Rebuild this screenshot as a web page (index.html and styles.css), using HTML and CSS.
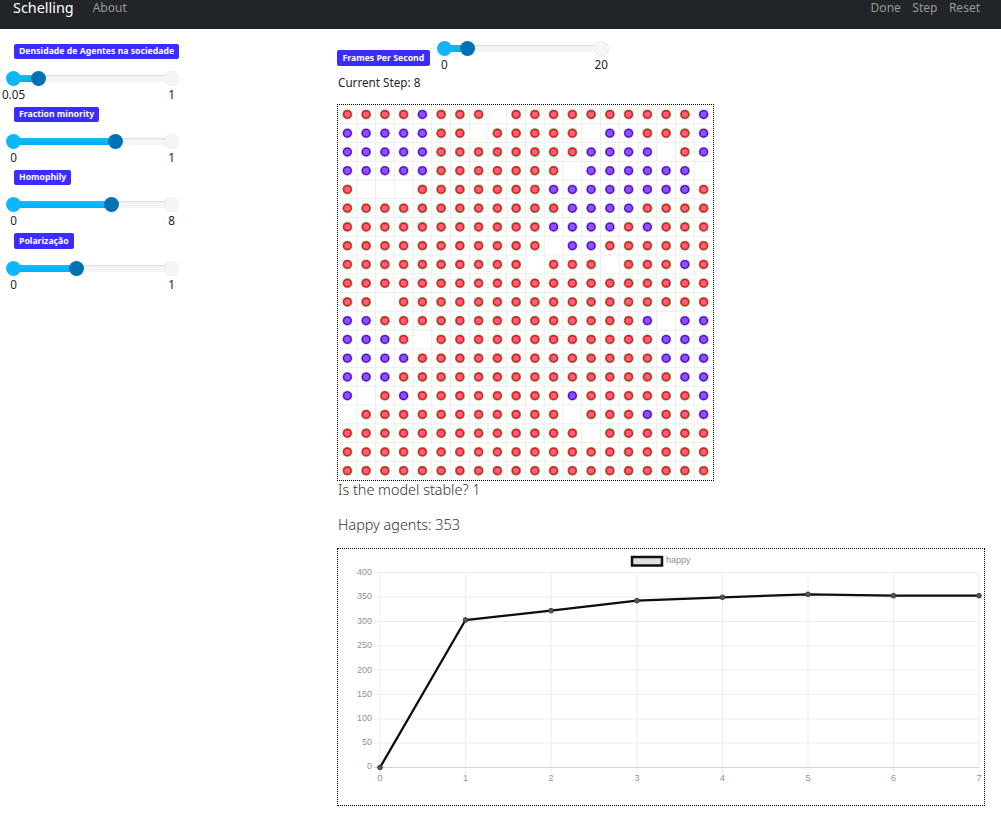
FILE: index.html
```html
<!DOCTYPE html>
<html lang="en">
<head>
    <meta charset="UTF-8">
    <title>Schelling</title>
    <link rel="stylesheet" href="styles.css">
</head>
<body>
    <nav class="navbar">
        <a class="brand" href="#">Schelling</a>
        <a class="nav-link about" href="#">About</a>
        <div class="nav-right">
            <a class="nav-link" href="#">Done</a>
            <a class="nav-link" href="#">Step</a>
            <a class="nav-link" href="#">Reset</a>
        </div>
    </nav>

    <div class="page">
        <div class="sidebar">
            <div class="param">
                <span class="badge">Densidade de Agentes na sociedade</span>
                <div class="slider">
                    <div class="track"><div class="fill" style="width: 15.8%"></div></div>
                    <span class="knob knob-min"></span>
                    <span class="knob knob-max"></span>
                    <span class="knob knob-value" style="left: 15.8%"></span>
                </div>
                <div class="range"><span>0.05</span><span>1</span></div>
            </div>
            <div class="param">
                <span class="badge">Fraction minority</span>
                <div class="slider">
                    <div class="track"><div class="fill" style="width: 64.6%"></div></div>
                    <span class="knob knob-min"></span>
                    <span class="knob knob-max"></span>
                    <span class="knob knob-value" style="left: 64.6%"></span>
                </div>
                <div class="range"><span>0</span><span>1</span></div>
            </div>
            <div class="param">
                <span class="badge">Homophily</span>
                <div class="slider">
                    <div class="track"><div class="fill" style="width: 62.2%"></div></div>
                    <span class="knob knob-min"></span>
                    <span class="knob knob-max"></span>
                    <span class="knob knob-value" style="left: 62.2%"></span>
                </div>
                <div class="range"><span>0</span><span>8</span></div>
            </div>
            <div class="param">
                <span class="badge">Polarização</span>
                <div class="slider">
                    <div class="track"><div class="fill" style="width: 40%"></div></div>
                    <span class="knob knob-min"></span>
                    <span class="knob knob-max"></span>
                    <span class="knob knob-value" style="left: 40%"></span>
                </div>
                <div class="range"><span>0</span><span>1</span></div>
            </div>
        </div>

        <div class="main">
            <div class="fps">
                <span class="badge">Frames Per Second</span>
                <div class="fps-control">
                    <div class="slider">
                        <div class="track"><div class="fill" style="width: 15%"></div></div>
                        <span class="knob knob-min"></span>
                        <span class="knob knob-max"></span>
                        <span class="knob knob-value" style="left: 15%"></span>
                    </div>
                    <div class="range"><span>0</span><span>20</span></div>
                </div>
            </div>
            <p class="step">Current Step: 8</p>
            <div class="grid-box">
                <canvas id="grid" width="375" height="375"></canvas>
            </div>
            <p class="stat">Is the model stable? 1</p>
            <p class="stat">Happy agents: 353</p>
            <div class="chart-box">
                <svg class="chart" width="646" height="256" viewBox="0 0 646 256">
                    <rect class="legend-box" x="294" y="8" width="30" height="8.5"/>
                    <text class="legend-text" x="328" y="14">happy</text>

                    <g class="gridlines">
                        <line x1="36" y1="23.5" x2="641" y2="23.5"/>
                        <line x1="36" y1="48" x2="641" y2="48"/>
                        <line x1="36" y1="72.5" x2="641" y2="72.5"/>
                        <line x1="36" y1="97" x2="641" y2="97"/>
                        <line x1="36" y1="121" x2="641" y2="121"/>
                        <line x1="36" y1="145.5" x2="641" y2="145.5"/>
                        <line x1="36" y1="170" x2="641" y2="170"/>
                        <line x1="36" y1="194" x2="641" y2="194"/>
                        <line x1="42" y1="23" x2="42" y2="224"/>
                        <line x1="127.5" y1="23" x2="127.5" y2="224"/>
                        <line x1="213" y1="23" x2="213" y2="224"/>
                        <line x1="299" y1="23" x2="299" y2="224"/>
                        <line x1="384.5" y1="23" x2="384.5" y2="224"/>
                        <line x1="470" y1="23" x2="470" y2="224"/>
                        <line x1="555.5" y1="23" x2="555.5" y2="224"/>
                        <line x1="641" y1="23" x2="641" y2="224"/>
                    </g>
                    <line class="axis" x1="36" y1="218.5" x2="641" y2="218.5"/>

                    <g class="y-labels">
                        <text x="34" y="26">400</text>
                        <text x="34" y="50">350</text>
                        <text x="34" y="75">300</text>
                        <text x="34" y="99">250</text>
                        <text x="34" y="124">200</text>
                        <text x="34" y="148">150</text>
                        <text x="34" y="172">100</text>
                        <text x="34" y="196">50</text>
                        <text x="34" y="220">0</text>
                    </g>
                    <g class="x-labels">
                        <text x="42" y="232">0</text>
                        <text x="127.5" y="232">1</text>
                        <text x="213" y="232">2</text>
                        <text x="299" y="232">3</text>
                        <text x="384.5" y="232">4</text>
                        <text x="470" y="232">5</text>
                        <text x="555.5" y="232">6</text>
                        <text x="641" y="232">7</text>
                    </g>

                    <polyline class="series" points="42,218.5 127.5,71 213,61.7 299,51.7 384.5,48.3 470,45.3 555.5,46.7 641,46.7"/>
                    <g class="points">
                        <circle cx="42" cy="218.5" r="2.4"/>
                        <circle cx="127.5" cy="71" r="2.4"/>
                        <circle cx="213" cy="61.7" r="2.4"/>
                        <circle cx="299" cy="51.7" r="2.4"/>
                        <circle cx="384.5" cy="48.3" r="2.4"/>
                        <circle cx="470" cy="45.3" r="2.4"/>
                        <circle cx="555.5" cy="46.7" r="2.4"/>
                        <circle cx="641" cy="46.7" r="2.4"/>
                    </g>
                </svg>
            </div>
        </div>
    </div>

    <script src="grid.js"></script>
</body>
</html>
```

FILE: styles.css
```css
body {
    margin: 0;
    font-family: "Noto Sans", sans-serif;
    font-size: 11.7px;
    color: #212529;
    background: #fff;
}
a {
    text-decoration: none;
}

.navbar {
    display: flex;
    align-items: flex-start;
    height: 29px;
    padding: 0 21px 0 13px;
    background: #212529;
}
.brand {
    font-size: 14.4px;
    line-height: 16px;
    color: #fff;
}
.nav-link {
    font-size: 12px;
    line-height: 15px;
    color: #999;
}
.about {
    margin-left: 19px;
}
.nav-right {
    display: flex;
    gap: 11.5px;
    margin-left: auto;
}

.page {
    display: flex;
    align-items: flex-start;
}
.sidebar {
    width: 173px;
    padding: 15px 0 0 6px;
    margin-right: 158px;
}
.param {
    height: 63px;
}
.badge {
    display: block;
    width: fit-content;
    padding: 0 5px;
    font-size: 8.7px;
    font-weight: 700;
    line-height: 15px;
    white-space: nowrap;
    color: #fff;
    background: #3b2dff;
    border-radius: 2px;
}
.param .badge {
    margin-left: 8px;
}
.param:last-child .badge {
    line-height: 16px;
}

.slider {
    position: relative;
    height: 15px;
    margin: 0 7.5px;
}
.param .slider {
    margin-top: 12px;
}
.track {
    position: absolute;
    top: 4px;
    left: 0;
    right: 0;
    height: 7px;
    background: #f5f5f5;
    box-shadow: inset 0 1px 1px rgba(0,0,0,0.1);
}
.fill {
    height: 100%;
    background: linear-gradient(#19baf5, #00b0ff);
}
.knob {
    position: absolute;
    top: 0;
    width: 15px;
    height: 15px;
    margin-left: -7.5px;
    border-radius: 50%;
}
.knob-min {
    left: 0;
    background: #0fb6fb;
}
.knob-max {
    left: 100%;
    background: #f5f5f5;
    box-shadow: inset 0 0 1px rgba(0,0,0,0.15);
}
.knob-value {
    background: #0071b4;
}
.range {
    display: flex;
    justify-content: space-between;
    line-height: 16px;
}
.range span {
    display: flex;
    justify-content: center;
    width: 15px;
    white-space: nowrap;
}

.main {
    width: 648px;
}
.fps {
    display: flex;
    align-items: flex-start;
    height: 45px;
}
.fps .badge {
    flex: none;
    margin-top: 21px;
    margin-right: 7px;
    padding: 0 5.5px;
    line-height: 16px;
}
.fps-control {
    width: 172px;
    padding-top: 12px;
}
.step {
    margin: 0 0 0 1px;
    line-height: 17px;
}
.grid-box {
    width: 375px;
    height: 375px;
    margin-top: 13px;
    border: 1px dotted #000;
}
#grid {
    display: block;
}
.stat {
    margin: 0 0 17px 1px;
    font-size: 14.4px;
    font-weight: 300;
    line-height: 18px;
    color: #333;
}
.stat + .stat {
    margin-bottom: 14px;
}
.chart-box {
    width: 646px;
    height: 256px;
    border: 1px dotted #000;
}
.chart {
    display: block;
}
.chart text {
    font-family: "Liberation Sans", sans-serif;
    font-size: 9px;
    fill: #919191;
}
.legend-box {
    fill: #e0e0e0;
    stroke: #111;
    stroke-width: 2.5;
}
.gridlines line {
    stroke: #ececec;
    stroke-width: 1;
}
.axis {
    stroke: #d4d4d4;
    stroke-width: 1;
}
.y-labels text {
    text-anchor: end;
}
.x-labels text {
    text-anchor: middle;
}
.series {
    fill: none;
    stroke: #0d0d0d;
    stroke-width: 2.3;
}
.points circle {
    fill: #555;
    stroke: #333;
    stroke-width: 0.8;
}
```

FILE: grid.js
```js
// r = red agent, p = purple agent, . = empty cell
const rows = [
    "rrrrprrr.rrrrrrrrrrp",
    "ppppprr.rrrrr.pprrrp",
    "ppppprrrrrrrrpppp.rp",
    "ppppprrrrrrr.pppppp.",
    "r...rrrrrrrppppppppr",
    "rrrrrrrrrrrrpppprrrr",
    "rrrrrrrrrrrpppprprrr",
    "rrrrrrrrrrr.pprrrrrr",
    "rrrrrrrrrr.rrr.rrrpr",
    "rrrrrrrrrrrrrrrrrrrr",
    "rr.rrrrrrrrrrrrrrrrr",
    "pprrrrrrrrrrrrrrp.pp",
    "pppr.rrrrrrrrrrrrppp",
    "pppprrrrrrrrrrrrrppp",
    "ppprrrrrrrrrrrrrrrpp",
    "p.rprrrrrrrrprrrrrrp",
    ".rrrrrrrrrrr.rrrprrp",
    "rrrrrrrrrrrrr.rrrrrr",
    "rrrrrrrrrrrrrrrrrrrr",
    "rrrrrrrrrrrrrrrrrrrr"
];

const ctx = document.getElementById("grid").getContext("2d");
const cell = 375 / 20;

ctx.strokeStyle = "#eee";
ctx.lineWidth = 1;
for (let i = 1; i < 20; i++) {
    ctx.beginPath();
    ctx.moveTo(i * cell, 0);
    ctx.lineTo(i * cell, 375);
    ctx.moveTo(0, i * cell);
    ctx.lineTo(375, i * cell);
    ctx.stroke();
}

function dot(x, y, r, color) {
    ctx.beginPath();
    ctx.arc(x, y, r, 0, Math.PI * 2);
    ctx.fillStyle = color;
    ctx.fill();
}

rows.forEach((row, j) => {
    [...row].forEach((kind, i) => {
        const x = (i + 0.5) * cell;
        const y = (j + 0.5) * cell;
        if (kind === "r") {
            dot(x, y, 5, "#4be03a");
            dot(x, y, 4.4, "#fa0a30");
            dot(x, y, 3, "#ff6080");
        } else if (kind === "p") {
            dot(x, y, 5, "#b9a0f5");
            dot(x, y, 4.5, "#4a0fc8");
            dot(x, y, 3.1, "#9050ff");
        }
    });
});
```
